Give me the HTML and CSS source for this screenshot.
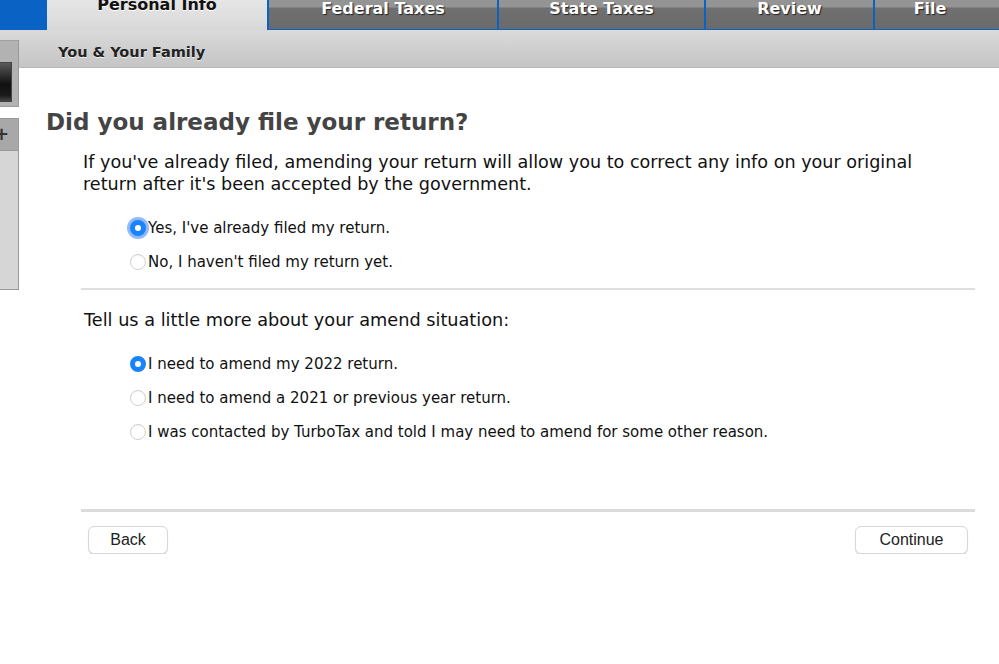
FILE: index.html
```html
<!DOCTYPE html>
<html lang="en">
<head>
    <meta charset="UTF-8">
    <meta name="viewport" content="width=device-width, initial-scale=1.0">
    <title>Personal Info</title>
    <link rel="stylesheet" href="styles.css">
</head>
<body>
    <div class="tabs">
        <div class="tab-lead"></div>
        <div class="tab active t-personal">Personal Info</div>
        <div class="tab t-federal">Federal Taxes</div>
        <div class="tab t-state">State Taxes</div>
        <div class="tab t-review">Review</div>
        <div class="tab t-file">File</div>
    </div>

    <div class="below">
        <div class="sidebar">
            <div class="side-top"><div class="side-knob"></div></div>
            <div class="side-panel">
                <div class="side-head">+</div>
                <div class="side-body"></div>
            </div>
        </div>

        <div class="content">
            <div class="subbar">You &amp; Your Family</div>

            <div class="main">
                <h1>Did you already file your return?</h1>
                <p class="intro">If you've already filed, amending your return will allow you to correct any info on your original return after it's been accepted by the government.</p>

                <div class="options first">
                    <label class="option"><span class="radio checked focus"></span>Yes, I've already filed my return.</label>
                    <label class="option"><span class="radio"></span>No, I haven't filed my return yet.</label>
                </div>

                <div class="rule"></div>

                <p class="question">Tell us a little more about your amend situation:</p>

                <div class="options second">
                    <label class="option"><span class="radio checked"></span>I need to amend my 2022 return.</label>
                    <label class="option"><span class="radio"></span>I need to amend a 2021 or previous year return.</label>
                    <label class="option"><span class="radio"></span>I was contacted by TurboTax and told I may need to amend for some other reason.</label>
                </div>

                <div class="footer">
                    <button class="btn">Back</button>
                    <button class="btn continue">Continue</button>
                </div>
            </div>
        </div>
    </div>
</body>
</html>
```

FILE: styles.css
```css
body {
    margin: 0;
    font-family: 'DejaVu Sans', Verdana, sans-serif;
    background-color: #ffffff;
    color: #111;
    overflow: hidden;
}
.tabs {
    display: flex;
    height: 30px;
    background-color: #0a63c4;
}
.tab-lead {
    width: 47px;
}
.tab {
    display: flex;
    justify-content: center;
    font-size: 16px;
    font-weight: bold;
    color: #fff;
    line-height: 18px;
    text-shadow: 1px 1px 1px #222;
    background: linear-gradient(#949494 0, #949494 7px, #707070 8px, #6a6a6a 100%);
    margin-left: 2px;
    margin-bottom: 1px;
}
.tab.active {
    margin-left: 0;
    margin-bottom: 0;
    color: #111;
    text-shadow: 0 1px 0 #fff;
    background: linear-gradient(#e6e6e6, #d8d8d8);
    line-height: 10px;
}
.t-personal { width: 220px; }
.t-federal { width: 228px; }
.t-state { width: 205px; }
.t-review { width: 167px; }
.t-file { flex: 1; padding-right: 14px; }

.below {
    display: flex;
    background: linear-gradient(#dadada, #c4c4c4) top left / 100% 38px no-repeat;
}
.sidebar {
    width: 20px;
    flex-shrink: 0;
    padding-top: 10px;
}
.side-top {
    width: 19px;
    height: 67px;
    background-color: #b2b2b2;
    border-top: 1px solid #a0a0a0;
    border-right: 1px solid #999;
    border-bottom: 1px solid #999;
    box-sizing: border-box;
    padding-top: 21px;
}
.side-knob {
    width: 11px;
    height: 38px;
    background: linear-gradient(#5a5a5a, #111 55%, #1a1a1a 85%, #444);
    border: 1px solid #444;
    border-left: none;
}
.side-panel {
    margin-top: 11px;
    width: 19px;
    border: 1px solid #9a9a9a;
    border-left: none;
    box-sizing: border-box;
}
.side-head {
    height: 32px;
    background-color: #a8a8a8;
    border-bottom: 1px solid #999;
    font-size: 18px;
    font-weight: bold;
    color: #333;
    line-height: 30px;
    text-indent: -6px;
    box-sizing: border-box;
}
.side-body {
    height: 138px;
    background-color: #d6d6d6;
}

.content {
    flex: 1;
}
.subbar {
    height: 38px;
    box-sizing: border-box;
    border-bottom: 1px solid #b8b8b8;
    font-size: 14.5px;
    font-weight: bold;
    color: #222;
    padding: 14px 0 0 38px;
    text-shadow: 0 1px 0 #eee;
}

.main {
    padding-left: 26px;
    padding-right: 24px;
}
h1 {
    margin: 41px 0 0 0;
    font-size: 23px;
    color: #444;
    font-weight: bold;
}
.intro {
    margin: 16px 0 0 37px;
    font-size: 17.6px;
    line-height: 22px;
    max-width: 860px;
}
.options {
    margin-left: 84px;
    display: flex;
    flex-direction: column;
    gap: 16px;
    margin-top: 24px;
}
.options.second {
    margin-top: 25px;
}
.option {
    display: flex;
    align-items: center;
    font-size: 15px;
    height: 18px;
}
.radio {
    width: 16px;
    height: 16px;
    border-radius: 50%;
    border: 1px solid #cfcfcf;
    background: #fff;
    box-sizing: border-box;
    margin-right: 2px;
    flex-shrink: 0;
    box-shadow: inset 0 1px 1px rgba(0, 0, 0, 0.05);
}
.radio.checked {
    border: 5px solid #1a82fb;
    background: #fff;
}
.radio.focus {
    box-shadow: 0 0 0 3px rgba(70, 140, 250, 0.6);
}
.rule {
    height: 2px;
    background-color: #dedede;
    margin: 17px 0 0 35px;
}
.question {
    margin: 20px 0 0 38px;
    font-size: 17.7px;
}
.footer {
    margin: 68px 0 0 35px;
    border-top: 3px solid #dcdcdc;
    display: flex;
    justify-content: space-between;
    padding: 14px 7px 0 7px;
}
.btn {
    font-family: 'Liberation Sans', Arial, sans-serif;
    font-size: 16px;
    color: #222;
    background: #fff;
    border: 1px solid #d8d8d8;
    border-radius: 6px;
    box-shadow: 0 1px 1px rgba(0, 0, 0, 0.15);
    height: 28px;
    width: 80px;
}
.btn.continue {
    width: 113px;
}
```
